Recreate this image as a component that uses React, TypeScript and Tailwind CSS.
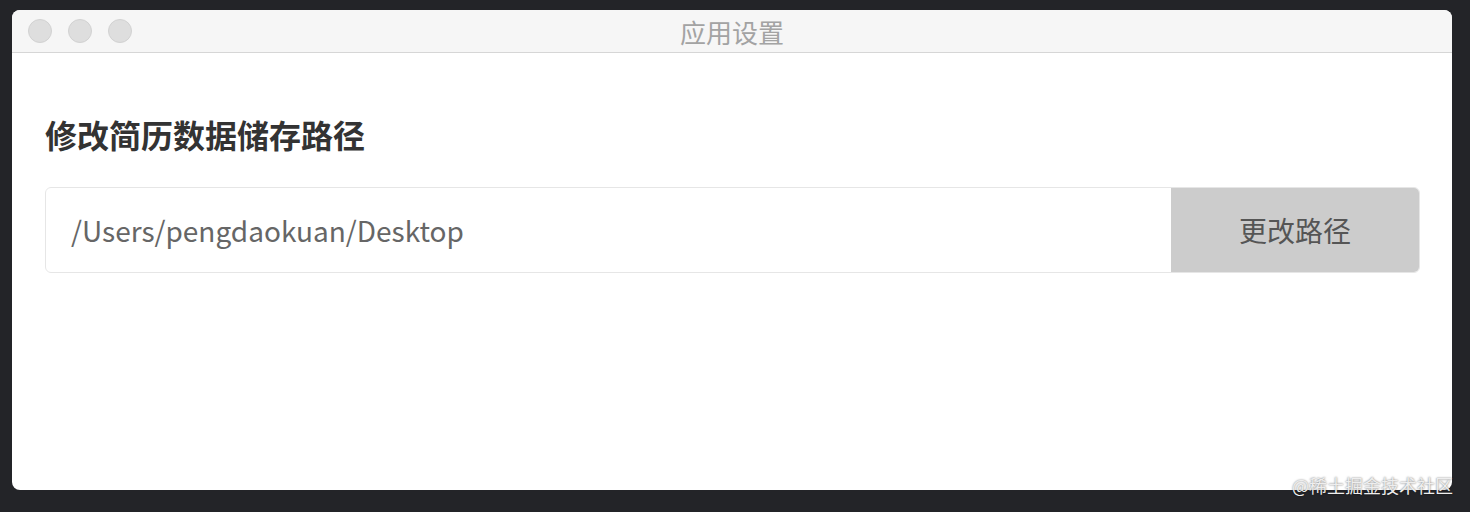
import React from "react";

export default function App() {
  const font = { fontFamily: '"PingFang SC","Noto Sans CJK SC","Noto Sans",sans-serif' };
  return (
    <div className="relative w-[1470px] h-[512px] bg-[#232428] overflow-hidden" style={font}>
      <div className="absolute left-[12px] top-[10px] w-[1440px] h-[480px] rounded-[8px] bg-white overflow-hidden flex flex-col">
        <div className="relative h-[43px] shrink-0 bg-[#f6f6f6] border-b border-[#d6d6d6] flex items-center">
          <div className="flex gap-[16px] pl-[16px]">
            <div className="w-[24px] h-[24px] rounded-full bg-[#dedede] border border-[#d2d2d2]" />
            <div className="w-[24px] h-[24px] rounded-full bg-[#dedede] border border-[#d2d2d2]" />
            <div className="w-[24px] h-[24px] rounded-full bg-[#dedede] border border-[#d2d2d2]" />
          </div>
          <div className="absolute inset-0 flex items-center justify-center text-[26px] text-[#a3a3a3] leading-none pt-[1px]">
            应用设置
          </div>
        </div>
        <div className="px-[33px] pt-[59px]">
          <div className="text-[32px] font-bold text-[#333333] leading-[44px]">修改简历数据储存路径</div>
          <div className="mt-[31px] h-[86px] w-[1375px] border border-[#e6e6e6] rounded-[6px] flex overflow-hidden">
            <div className="flex-1 flex items-center pl-[25px] text-[28px] text-[#666666]">
              /Users/pengdaokuan/Desktop
            </div>
            <div className="w-[248px] bg-[#cccccc] flex items-center justify-center text-[28px] text-[#555555]">
              更改路径
            </div>
          </div>
        </div>
      </div>
      <div
        className="absolute left-[1292px] top-[472px] text-[18px] leading-[26px] text-[#eeeeee]"
        style={{ textShadow: "0 0 2px rgba(0,0,0,0.6)" }}
      >
        @稀土掘金技术社区
      </div>
    </div>
  );
}
